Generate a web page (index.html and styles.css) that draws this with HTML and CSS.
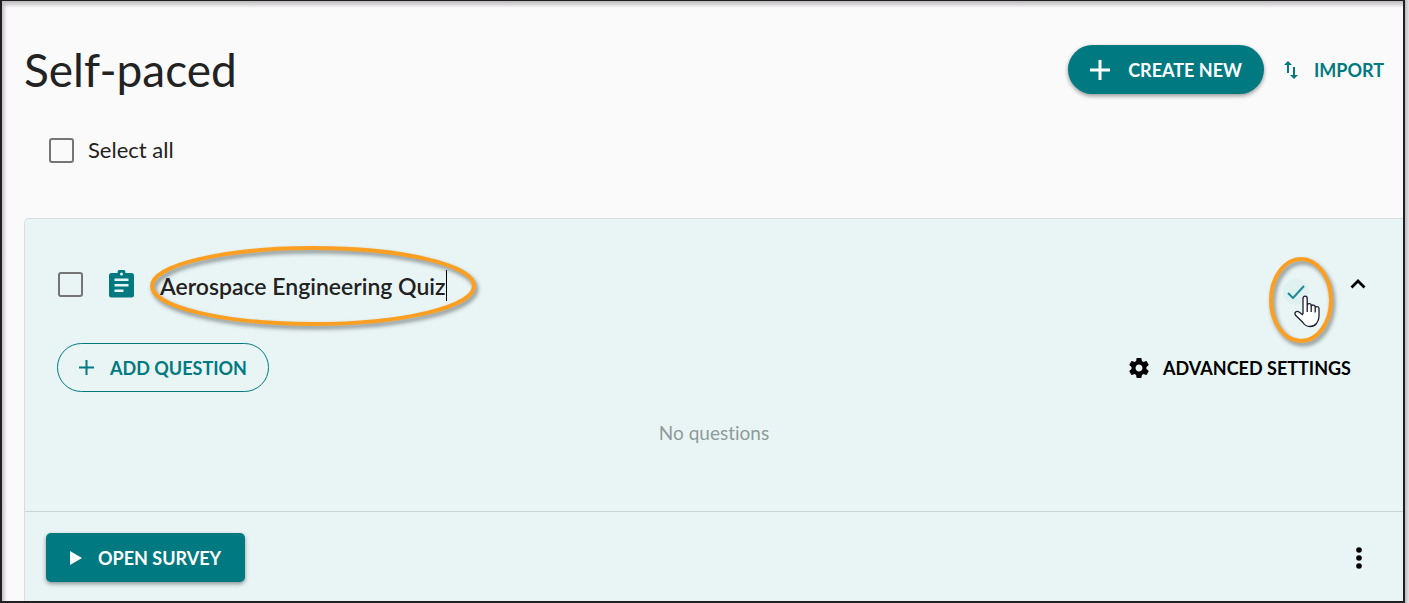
FILE: index.html
```html
<!DOCTYPE html>
<html lang="en">
<head>
    <meta charset="UTF-8">
    <meta name="viewport" content="width=device-width, initial-scale=1.0">
    <title>Self-paced</title>
    <link rel="stylesheet" href="styles.css">
</head>
<body>

<main class="frame">
    <header class="header">
        <h1>Self-paced</h1>
        <div class="header-actions">
            <button class="btn btn-create">
                <svg width="20" height="20" viewBox="0 0 20 20"><path d="M10 0v20M0 10h20" stroke="currentColor" stroke-width="3"/></svg>
                Create new
            </button>
            <button class="btn btn-import">
                <svg width="14" height="18" viewBox="0 0 14 18" fill="currentColor"><path d="M4 0l4 4H5v8H3V4H0zM10 18l-4-4h3V6h2v8h3z"/></svg>
                Import
            </button>
        </div>
    </header>

    <div class="select-all">
        <input type="checkbox" class="check" id="selectAll">
        <label for="selectAll">Select all</label>
    </div>

    <section class="card">
        <div class="quiz">
            <div class="quiz-title">
                <input type="checkbox" class="check" aria-label="Select quiz">
                <svg class="quiz-icon" width="25" height="28" viewBox="0 0 25 28"><path fill="#007a80" fill-rule="evenodd" d="M2.500 3H8.500a4 4 0 0 1 8 0H22.500a2.500 2.500 0 0 1 2.500 2.500V25a2.500 2.500 0 0 1-2.500 2.500H2.500A2.500 2.500 0 0 1 0 25V5.500A2.500 2.500 0 0 1 2.500 3zM12.500 2.500a1.500 1.500 0 1 0 0 3 1.500 1.500 0 0 0 0-3zM5.500 8.500v2.500h14V8.500zM5.500 14v2.500h14V14zM5.500 19.500V22h9v-2.500z"/></svg>
                <div class="name">
                    <input type="text" class="name-input" aria-label="Quiz name" value="Aerospace Engineering Quiz">
                    <span class="caret"></span>
                    <svg class="ring ring-name" width="330" height="84" viewBox="0 0 330 84"><ellipse cx="164" cy="41" rx="161" ry="38"/></svg>
                </div>
                <div class="title-actions">
                    <div class="confirm">
                        <button class="icon-btn btn-confirm" aria-label="Save name">
                            <svg width="18" height="14" viewBox="0 0 18 14"><path d="M1 8l5 5L17 1" fill="none" stroke="#1f8c92" stroke-width="2"/></svg>
                        </button>
                        <svg class="ring ring-confirm" width="68" height="92" viewBox="0 0 68 92"><ellipse cx="34" cy="44" rx="30" ry="41"/></svg>
                        <svg class="pointer" width="26" height="33" viewBox="0 0 26 33"><path d="M9 19V3.500C9 .3 13.200.3 13.200 3.500V13V10.800C13.200 8 17.200 8 17.200 10.800V14V11.800C17.200 9.300 21.200 9.500 21.200 12V15V13C21.200 11 25 11 25 13.500V21C25 25 23.500 27 22.500 28.500C20.500 31 18 31.500 16 31.500C12 31.500 10 29.500 8.500 27L1.800 20.500C-.5 17.500 2.500 15.300 5 17L9 20M13.200 12.500V17M17.200 13.500V17M21.200 14.500V17.500" fill="#fff" stroke="#1c1c30" stroke-width="1.300" stroke-linejoin="round"/></svg>
                    </div>
                    <button class="icon-btn" aria-label="Collapse">
                        <svg width="16" height="10" viewBox="0 0 16 10"><path d="M1.500 8.500L8 2l6.500 6.500" fill="none" stroke="#000" stroke-width="2.800"/></svg>
                    </button>
                </div>
            </div>

            <div class="quiz-tools">
                <button class="btn btn-add">
                    <svg width="15" height="15" viewBox="0 0 15 15"><path d="M7.500 0v15M0 7.500h15" stroke="currentColor" stroke-width="2"/></svg>
                    Add question
                </button>
                <button class="btn btn-settings">
                    <svg width="20" height="20" viewBox="2 2 20 20" fill="currentColor"><path d="M19.430 12.980c.04-.32.07-.64.07-.98s-.03-.66-.07-.98l2.110-1.650c.19-.15.24-.42.12-.64l-2-3.460c-.12-.22-.39-.3-.61-.22l-2.490 1c-.52-.4-1.080-.73-1.690-.98l-.38-2.650C14.460 2.180 14.250 2 14 2h-4c-.25 0-.46.18-.49.42l-.38 2.650c-.61.25-1.170.59-1.690.98l-2.490-1c-.23-.09-.49 0-.61.22l-2 3.460c-.13.22-.07.49.12.64l2.110 1.650c-.04.32-.07.65-.07.98s.03.66.07.98l-2.110 1.650c-.19.15-.24.42-.12.64l2 3.460c.12.22.39.3.61.22l2.490-1c.52.4 1.080.73 1.690.98l.38 2.650c.03.24.24.42.49.42h4c.25 0 .46-.18.49-.42l.38-2.650c.61-.25 1.170-.59 1.690-.98l2.490 1c.23.09.49 0 .61-.22l2-3.460c.12-.22.07-.49-.12-.64l-2.110-1.650zM12 15.500c-1.930 0-3.500-1.570-3.500-3.500s1.570-3.500 3.500-3.500 3.500 1.570 3.500 3.500-1.570 3.500-3.500 3.500z"/></svg>
                    Advanced settings
                </button>
            </div>

            <p class="empty">No questions</p>
        </div>

        <footer class="card-footer">
            <button class="btn btn-open">
                <svg width="12" height="14" viewBox="0 0 12 14" fill="currentColor"><path d="M0 0l12 7-12 7z"/></svg>
                Open survey
            </button>
            <button class="icon-btn" aria-label="More options">
                <svg width="6" height="22" viewBox="0 0 6 22"><circle cx="3" cy="3" r="2.800"/><circle cx="3" cy="11" r="2.800"/><circle cx="3" cy="19" r="2.800"/></svg>
            </button>
        </footer>
    </section>
</main>

</body>
</html>
```
FILE: styles.css
```css
* {
    box-sizing: border-box;
}
body {
    margin: 0;
    padding-right: 4px;
    background: linear-gradient(to left, #e4e2e4, #bdbabd 4px);
    font-family: Lato, sans-serif;
    font-variant-ligatures: none;
    color: #222;
}
.frame {
    display: flex;
    flex-direction: column;
    min-height: 100vh;
    border: 2px solid #211f22;
    border-top-width: 1px;
    background: linear-gradient(to right, #c4c2c4, transparent 5px), linear-gradient(#bbb8bb, transparent 7px), #fafafa;
    overflow: hidden;
}
.header {
    display: flex;
    align-items: center;
    justify-content: space-between;
    padding: 44px 19px 0 22px;
}
h1 {
    margin: 0;
    font-size: 46px;
    font-weight: 400;
    line-height: 48px;
}
.header-actions {
    display: flex;
    align-items: center;
    gap: 20px;
}
.btn {
    display: flex;
    align-items: center;
    padding: 0;
    border: none;
    background: none;
    color: #007a80;
    font-family: inherit;
    font-size: 18px;
    font-weight: 700;
    line-height: 24px;
    text-transform: uppercase;
    white-space: nowrap;
    cursor: pointer;
}
.btn-create,
.btn-open {
    height: 49px;
    background-color: #007a80;
    color: #fff;
    box-shadow: 0 2px 4px rgba(0, 0, 0, 0.4);
}
.btn-create {
    gap: 18px;
    padding: 0 22px;
    border-radius: 25px;
}
.btn-import {
    gap: 16px;
}
.select-all {
    display: flex;
    align-items: center;
    gap: 14px;
    padding: 42px 47px 54px;
    font-size: 22px;
    line-height: 28px;
}
.check {
    appearance: none;
    flex: none;
    width: 25px;
    height: 25px;
    margin: 0;
    border: 2px solid #757575;
    border-radius: 3px;
}
.card {
    display: flex;
    flex: 1;
    flex-direction: column;
    margin-left: 22px;
    border: 1px solid #dadddd;
    border-width: 1px 0 0 1px;
    border-top-left-radius: 5px;
    background-color: #e9f5f5;
}
.quiz {
    padding: 40px 32px 65px;
    border-bottom: 1px solid #c8d5d5;
}
.quiz-title {
    display: flex;
    align-items: center;
    height: 50px;
    padding: 0 5px 0 1px;
}
.quiz-icon {
    flex: none;
    margin: 0 26px;
}
.name {
    display: flex;
    align-items: center;
    position: relative;
    padding-top: 3px;
}
.name-input {
    field-sizing: content;
    padding: 0;
    border: none;
    outline: none;
    background: none;
    color: #222;
    font-family: inherit;
    font-size: 23px;
    font-weight: 600;
    line-height: 28px;
}
.caret {
    width: 1px;
    height: 31px;
    background-color: #000;
}
.ring {
    position: absolute;
    overflow: visible;
    fill: none;
    stroke: #fb9f22;
    stroke-width: 4px;
    filter: drop-shadow(2px 3px 2px rgba(0, 0, 0, 0.45));
    pointer-events: none;
}
.ring-name {
    top: -22px;
    left: -11px;
}
.title-actions {
    display: flex;
    align-items: center;
    gap: 41px;
    margin-left: auto;
}
.icon-btn {
    display: flex;
    align-items: center;
    justify-content: center;
    padding: 0;
    border: none;
    background: none;
    cursor: pointer;
}
.confirm {
    position: relative;
    padding-top: 16px;
}
.btn-confirm {
    width: 26px;
    height: 26px;
    border-radius: 50%;
    background-color: #dff0f0;
}
.ring-confirm {
    top: -7px;
    left: -16px;
}
.pointer {
    position: absolute;
    top: 32px;
    left: 11px;
}
.quiz-tools {
    display: flex;
    align-items: center;
    justify-content: space-between;
    padding-top: 34px;
}
.btn-add {
    height: 49px;
    gap: 16px;
    padding: 0 21px;
    border: 1px solid #007a80;
    border-radius: 25px;
}
.btn-settings {
    gap: 14px;
    padding-right: 20px;
    color: #000;
}
.empty {
    margin: 28px 0 0;
    color: #8f9a9a;
    font-size: 19px;
    line-height: 26px;
    text-align: center;
}
.card-footer {
    display: flex;
    align-items: center;
    justify-content: space-between;
    padding: 21px 41px 18px 21px;
}
.btn-open {
    gap: 16px;
    padding: 0 24px;
    border-radius: 5px;
}
```
